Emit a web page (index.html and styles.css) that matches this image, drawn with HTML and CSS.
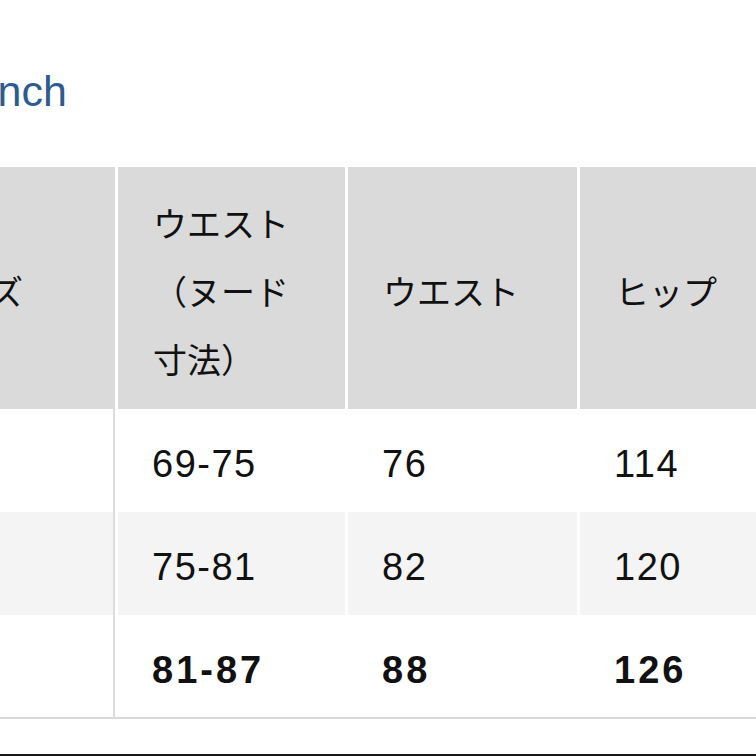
FILE: index.html
```html
<!DOCTYPE html>
<html lang="ja">
<head>
<meta charset="utf-8">
<title>サイズ表</title>
<link rel="stylesheet" href="styles.css">
</head>
<body>
<div class="page">
  <div class="unit-switch"><a class="unit-link" href="#">inch</a></div>
  <div class="table-wrap">
    <table class="size-table">
      <colgroup>
        <col class="col-first">
        <col class="col-a">
        <col class="col-b">
        <col class="col-b">
      </colgroup>
      <thead>
        <tr>
          <th class="head-first">サイズ</th>
          <th>ウエスト（ヌード寸法）</th>
          <th>ウエスト</th>
          <th>ヒップ</th>
        </tr>
      </thead>
      <tbody>
        <tr>
          <td class="cell-first">M</td>
          <td>69-75</td>
          <td>76</td>
          <td>114</td>
        </tr>
        <tr class="row-alt">
          <td class="cell-first">L</td>
          <td>75-81</td>
          <td>82</td>
          <td>120</td>
        </tr>
        <tr class="row-selected">
          <td class="cell-first">XL</td>
          <td>81-87</td>
          <td>88</td>
          <td>126</td>
        </tr>
      </tbody>
    </table>
  </div>
  <div class="next-section"></div>
</div>
</body>
</html>
```

FILE: styles.css
```css
html, body {
  margin: 0;
  padding: 0;
  background: #ffffff;
  overflow: hidden;
}

.page {
  width: 756px;
  height: 756px;
  font-family: "Liberation Sans", "Noto Sans CJK JP", sans-serif;
  color: #111111;
}

.unit-switch {
  padding-top: 66px;
  height: 50px;
  line-height: 50px;
  font-size: 43px;
  white-space: nowrap;
}

.unit-link {
  display: inline-block;
  margin-left: -12px;
  color: #2c5b8e;
  text-decoration: none;
}

.table-wrap {
  margin-top: 51px;
  overflow: hidden;
  border-bottom: 2px solid #d8d8d8;
}

.size-table {
  margin-left: -116px;
  table-layout: fixed;
  border-collapse: separate;
  border-spacing: 3px 0;
  width: 928px;
}

.col-first { width: 228px; }
.col-a { width: 227px; }
.col-b { width: 229px; }

.size-table th {
  background: #dadada;
  font-family: "Noto Sans CJK JP", sans-serif;
  font-weight: 400;
  font-size: 34px;
  line-height: 68px;
  text-align: left;
  vertical-align: middle;
  padding: 22px 35px 16px;
  color: #111111;
}

.size-table td {
  font-size: 38px;
  line-height: 68px;
  letter-spacing: 1.5px;
  padding: 21px 35px 14px 34px;
  vertical-align: middle;
  text-align: left;
  background: #ffffff;
  color: #111111;
}

.size-table .cell-first {
  border-right: 2px solid #dcdcdc;
}

.size-table .row-alt td {
  background: #f4f4f4;
}

.size-table .row-selected td {
  font-weight: 700;
  letter-spacing: 3px;
  padding-bottom: 13px;
}

.next-section {
  margin-top: 35px;
  border-top: 2px solid #1a1a1a;
  height: 0;
}
```
